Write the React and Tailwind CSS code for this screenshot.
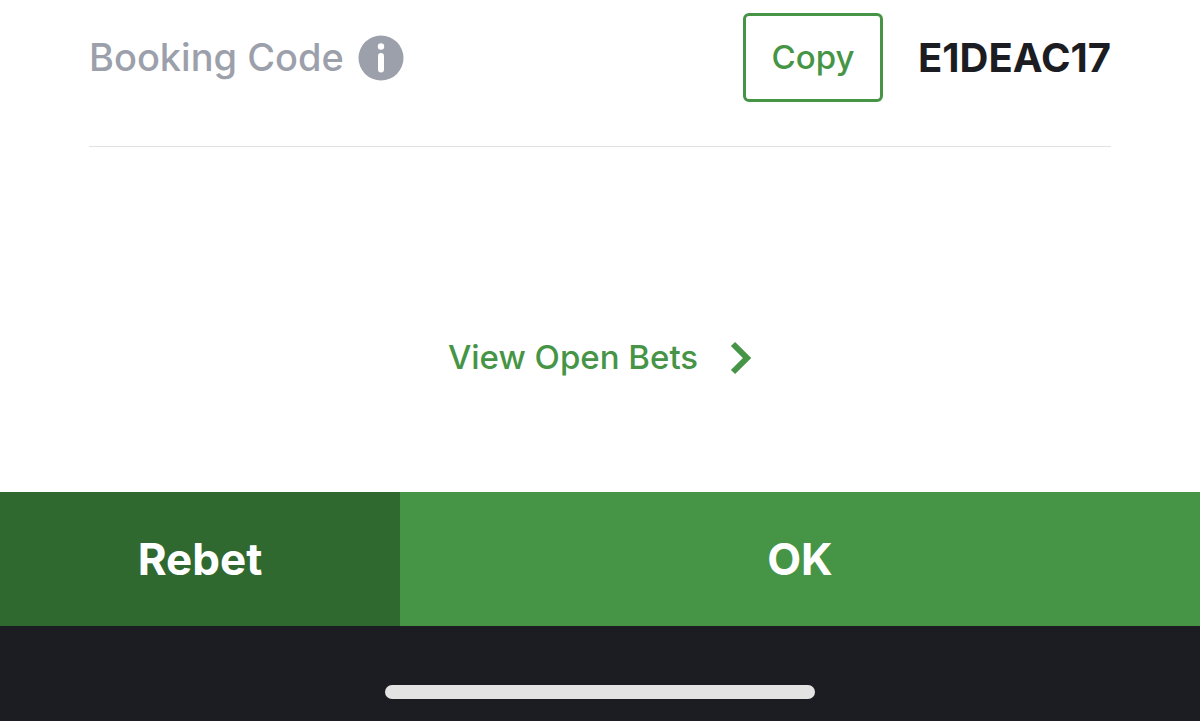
export default function App() {
  return (
    <div className="flex min-h-screen flex-col bg-white font-['Inter',sans-serif]">
      <main className="flex grow flex-col px-[89px]">
        <section className="flex h-[147px] items-start justify-between border-b border-[#e1e2e4] pt-[13px]">
          <div className="flex h-[89px] items-center gap-[14px] text-[#9ca0ab]">
            <span className="text-[38px] font-medium">Booking Code</span>
            <button type="button" aria-label="About booking codes">
              <svg className="size-[46px]" viewBox="0 0 46 46" aria-hidden="true">
                <circle cx="23" cy="23" r="22.5" fill="#9ca0ab" />
                <circle cx="23" cy="11.500" r="3.200" fill="#fff" />
                <path d="M23 21v13.500" stroke="#fff" strokeWidth="6" strokeLinecap="round" />
              </svg>
            </button>
          </div>
          <div className="flex h-[89px] items-center gap-[35px]">
            <button type="button" className="h-[89px] w-[140px] rounded-md border-3 border-[#469546] text-[33px] font-medium text-[#469546]">Copy</button>
            <span className="text-[40px] font-bold text-[#1c1d22]">E1DEAC17</span>
          </div>
        </section>
        <a href="#open-bets" className="mt-[184px] flex h-[54px] items-center gap-[32px] self-center text-[33px] font-medium text-[#469546]">
          View Open Bets
          <svg className="h-[34px] w-[22px]" viewBox="0 0 22 34" fill="none" aria-hidden="true">
            <path d="M3 3L17 17L3 31" stroke="#469546" strokeWidth="6" />
          </svg>
        </a>
      </main>
      <footer>
        <div className="grid h-[134px] grid-cols-3 text-[44px] font-bold text-white">
          <button type="button" className="bg-[#30692f]">Rebet</button>
          <button type="button" className="col-span-2 bg-[#469546]">OK</button>
        </div>
        <div className="flex h-[95px] justify-center bg-[#1c1d22] pt-[59px]">
          <div className="h-[14px] w-[430px] rounded-full bg-[#e3e3e3]" />
        </div>
      </footer>
    </div>
  );
}
